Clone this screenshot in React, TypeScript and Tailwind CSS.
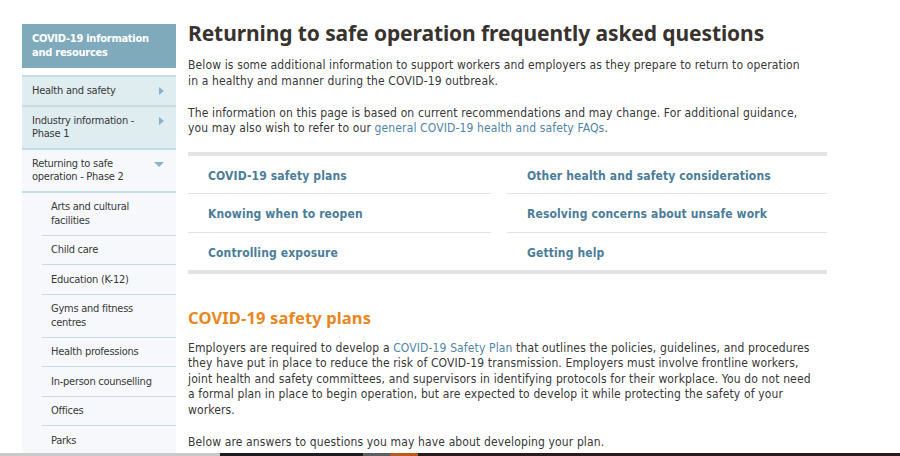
const sideItems = [
  { label: ['Health and safety'], arrow: 'right' },
  { label: ['Industry information -', 'Phase 1'], arrow: 'right' },
];

const subItems = [
  ['Arts and cultural', 'facilities'],
  ['Child care'],
  ['Education (K-12)'],
  ['Gyms and fitness', 'centres'],
  ['Health professions'],
  ['In-person counselling'],
  ['Offices'],
  ['Parks'],
];

const faqLeft = ['COVID-19 safety plans', 'Knowing when to reopen', 'Controlling exposure'];
const faqRight = ['Other health and safety considerations', 'Resolving concerns about unsafe work', 'Getting help'];
const rowHeights = ['h-[38px]', 'h-[39px]', 'h-[37px]'];

const body = "font-['DejaVu_Sans_Condensed','DejaVu_Sans',sans-serif] [font-stretch:condensed]";

const Lines = ({ lines }: { lines: string[] }) => (
  <>
    {lines.map((l, i) => (
      <span key={i} className="block whitespace-nowrap">
        {l}
      </span>
    ))}
  </>
);

const Sidebar = () => (
  <aside className={`mt-[23.5px] ml-[22px] w-[154px] shrink-0 ${body} text-[11px] leading-[13.5px] tracking-[-0.25px] text-[#383838]`}>
    <div className="bg-[#7faabc] px-[10px] py-[8px] leading-[14px] font-bold text-white">
      <Lines lines={['COVID-19 information', 'and resources']} />
    </div>

    <ul className="mt-[7.5px]">
      {sideItems.map((item) => (
        <li key={item.label[0]} className="flex items-start justify-between border-t-2 border-[#c6dce4] bg-[#dfecf0] py-[7px] pl-[10px] pr-[12px]">
          <span>
            <Lines lines={item.label} />
          </span>
          <span className="mt-[3px] h-0 w-0 border-y-[4px] border-l-[5px] border-y-transparent border-l-[#85b2cd]" />
        </li>
      ))}

      <li className="border-y-2 border-[#c6dce4] bg-[#f6f8fc]">
        <div className="flex items-start justify-between py-[7px] pl-[10px] pr-[12px]">
          <span>
            <Lines lines={['Returning to safe', 'operation - Phase 2']} />
          </span>
          <span className="mt-[5px] h-0 w-0 border-x-[5px] border-t-[5px] border-x-transparent border-t-[#85b2cd]" />
        </div>
      </li>

      <li className="bg-[#f6f8fc] pl-[20px]">
        <ul>
          {subItems.map((s, i) => (
            <li key={s[0]} className={`py-[7.5px] pl-[9px] ${i > 0 ? 'border-t border-[#c5dbe3]' : ''}`}>
              <Lines lines={s} />
            </li>
          ))}
        </ul>
      </li>
    </ul>
  </aside>
);

const Link = ({ children }: { children: string }) => <a className="text-[#4f85a6]">{children}</a>;

const FaqColumn = ({ items }: { items: string[] }) => (
  <div>
    {items.map((q, i) => (
      <div
        key={q}
        className={`flex items-center pt-[4px] pl-[20px] font-bold text-[#4b7d99] ${rowHeights[i]} ${i < items.length - 1 ? 'border-b border-[#e3e3e3]' : ''}`}
      >
        {q}
      </div>
    ))}
  </div>
);

const Content = () => (
  <main className={`ml-[12px] w-[660px] pt-[19px] ${body} text-[12px] leading-[15.6px] tracking-[0.13px] text-[#383838]`}>
    <h1 className="font-['Noto_Sans',sans-serif] text-[21px] leading-[28px] font-bold tracking-[-0.1px] text-[#38332f] [font-stretch:normal]">
      Returning to safe operation frequently asked questions
    </h1>

    <p className="mt-[11.4px]">
      <span className="block whitespace-nowrap">
        Below is some additional information to support workers and employers as they prepare to return to operation
      </span>
      <span className="block whitespace-nowrap">in a healthy and manner during the COVID-19 outbreak.</span>
    </p>

    <p className="mt-[16px]">
      <span className="block whitespace-nowrap">
        The information on this page is based on current recommendations and may change. For additional guidance,
      </span>
      <span className="block whitespace-nowrap">
        you may also wish to refer to our <Link>general COVID-19 health and safety FAQs</Link>.
      </span>
    </p>

    <div className="mt-[15.5px] grid w-[639px] grid-cols-[303px_320px] gap-x-[16px] border-y-4 border-[#e4e4e4]">
      <FaqColumn items={faqLeft} />
      <FaqColumn items={faqRight} />
    </div>

    <h2 className="mt-[32.6px] font-['Noto_Sans',sans-serif] text-[16.5px] leading-[22px] font-bold text-[#e8871e] [font-stretch:normal]">
      COVID-19 safety plans
    </h2>

    <p className="mt-[11.7px]">
      <span className="block whitespace-nowrap">
        Employers are required to develop a <Link>COVID-19 Safety Plan</Link> that outlines the policies, guidelines, and procedures
      </span>
      <span className="block whitespace-nowrap">
        they have put in place to reduce the risk of COVID-19 transmission. Employers must involve frontline workers,
      </span>
      <span className="block whitespace-nowrap">
        joint health and safety committees, and supervisors in identifying protocols for their workplace. You do not need
      </span>
      <span className="block whitespace-nowrap">
        a formal plan in place to begin operation, but are expected to develop it while protecting the safety of your
      </span>
      <span className="block whitespace-nowrap">workers.</span>
    </p>

    <p className="mt-[16px]">Below are answers to questions you may have about developing your plan.</p>
  </main>
);

export default function App() {
  return (
    <div className="relative h-[456px] w-[900px] overflow-hidden bg-white">
      <div className="flex items-start">
        <Sidebar />
        <Content />
      </div>

      {/* screen edge strip */}
      <div className="absolute bottom-0 left-0 flex h-[3px] w-full">
        <div className="w-[220px] bg-[#c9c9c9]" />
        <div className="w-[143px] bg-[#1e1e22]" />
        <div className="w-[27px] bg-[#5e5e60]" />
        <div className="w-[28px] bg-[#b85a1e]" />
        <div className="flex-1 bg-[#2a1c1a]" />
      </div>
    </div>
  );
}
